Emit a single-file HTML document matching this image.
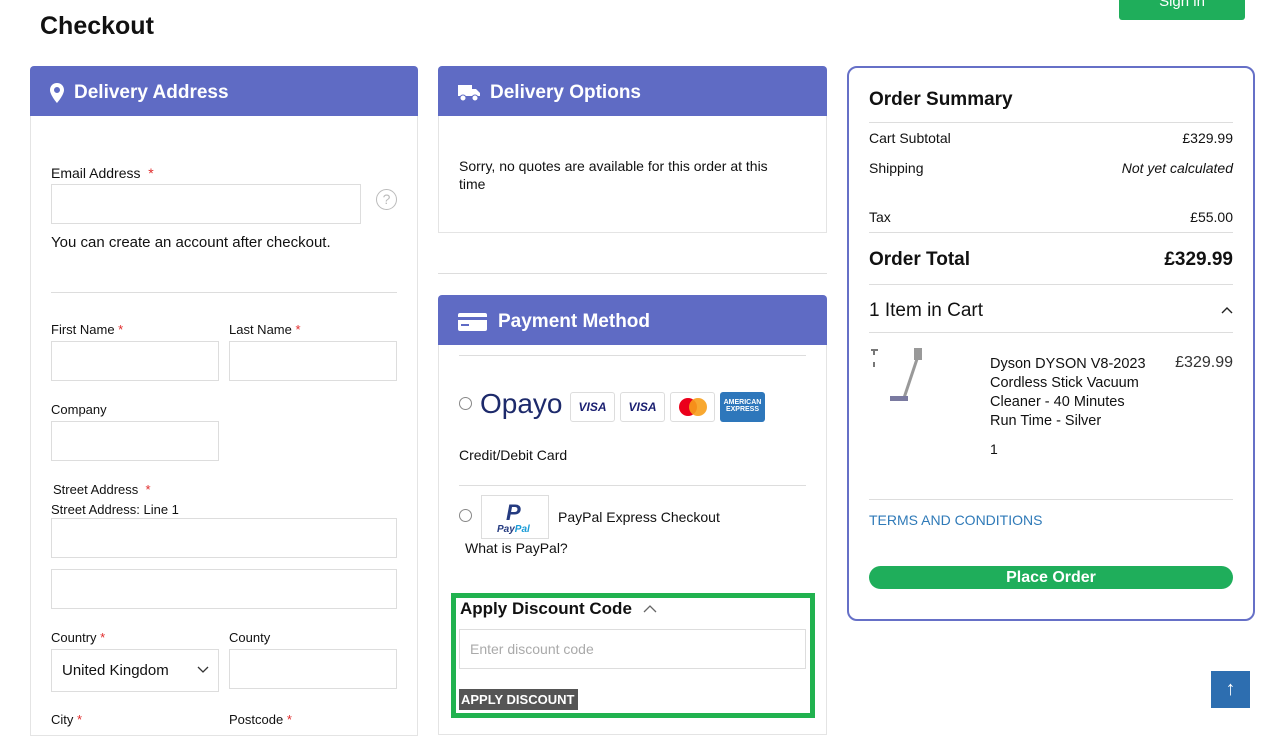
<!DOCTYPE html>
<html><head><meta charset="utf-8"><style>
*{box-sizing:border-box;margin:0;padding:0}
body{width:1280px;height:720px;overflow:hidden;background:#fff;font-family:"Liberation Sans",sans-serif;color:#111;position:relative}
.a{position:absolute}
.t{position:absolute;font-size:14px;white-space:nowrap}
.r{position:absolute;font-size:14px;white-space:nowrap;text-align:right}
.in{position:absolute;border:1px solid #ddd;background:#fff}
.hd{position:absolute;background:#5f6bc4;color:#fff;font-size:19px;font-weight:bold;border-radius:4px 4px 0 0;height:50px;display:flex;align-items:center;padding-left:20px;padding-top:4px;gap:10px}
.pan{position:absolute;border:1px solid #e4e4e4;border-top:none}
.st{color:#e02b2b}
.hr{position:absolute;height:1px;background:#ddd}
.card{position:absolute;width:45px;height:30px;border:1px solid #ddd;border-radius:3px;background:#fff;font:italic bold 12px "Liberation Sans",sans-serif;color:#1a1f71;display:flex;align-items:center;justify-content:center}
</style></head><body>
<div class="t" style="left:40px;top:12px;font-size:25px;font-weight:bold">Checkout</div>
<div class="a" style="left:1119px;top:0px;width:126px;height:20px;background:#1fae5b;border-radius:0 0 3px 3px;overflow:hidden"><div style="position:absolute;left:0;width:126px;top:-7px;color:#fff;font-size:15px;text-align:center">Sign in</div></div>

<!-- Delivery address -->
<div class="hd" style="left:30px;top:66px;width:388px"><svg width="14" height="20" viewBox="0 0 14 20"><path d="M7 0C3 0 0 3 0 7c0 5 7 13 7 13s7-8 7-13C14 3 11 0 7 0zm0 10a3 3 0 110-6 3 3 0 010 6z" fill="#fff"/></svg>Delivery Address</div>
<div class="pan" style="left:30px;top:116px;width:388px;height:620px"></div>
<div class="t" style="left:51px;top:165px">Email Address &nbsp;<span class="st">*</span></div>
<div class="in" style="left:51px;top:184px;width:310px;height:40px"></div>
<div class="a" style="left:376px;top:189px;width:21px;height:21px;border:1.5px solid #bbb;border-radius:50%;color:#bbb;font-size:14px;text-align:center;line-height:18px">?</div>
<div class="t" style="left:51px;top:234px;font-size:15px">You can create an account after checkout.</div>
<div class="hr" style="left:51px;top:292px;width:346px"></div>
<div class="t" style="left:51px;top:322px;font-size:13px">First Name <span class="st">*</span></div>
<div class="t" style="left:229px;top:322px;font-size:13px">Last Name <span class="st">*</span></div>
<div class="in" style="left:51px;top:341px;width:168px;height:40px"></div>
<div class="in" style="left:229px;top:341px;width:168px;height:40px"></div>
<div class="t" style="left:51px;top:402px;font-size:13px">Company</div>
<div class="in" style="left:51px;top:421px;width:168px;height:40px"></div>
<div class="t" style="left:53px;top:482px;font-size:13px">Street Address &nbsp;<span class="st">*</span></div>
<div class="t" style="left:51px;top:502px;font-size:13px">Street Address: Line 1</div>
<div class="in" style="left:51px;top:518px;width:346px;height:40px"></div>
<div class="in" style="left:51px;top:569px;width:346px;height:40px"></div>
<div class="t" style="left:51px;top:630px;font-size:13px">Country <span class="st">*</span></div>
<div class="t" style="left:229px;top:630px;font-size:13px">County</div>
<div class="in" style="left:51px;top:649px;width:168px;height:43px"></div>
<div class="t" style="left:62px;top:662px;font-size:15px">United Kingdom</div>
<svg class="a" style="left:197px;top:666px" width="12" height="8" viewBox="0 0 12 8"><path d="M1 1l5 5 5-5" stroke="#333" fill="none" stroke-width="1.3"/></svg>
<div class="in" style="left:229px;top:649px;width:168px;height:40px"></div>
<div class="t" style="left:51px;top:712px;font-size:13px">City <span class="st">*</span></div>
<div class="t" style="left:229px;top:712px;font-size:13px">Postcode <span class="st">*</span></div>

<!-- Delivery options -->
<div class="hd" style="left:438px;top:66px;width:389px"><svg width="22" height="18" viewBox="0 0 22 18"><path d="M0 1h14v11H0zM14 5h4l4 4v3h-8z" fill="#fff"/><circle cx="5" cy="14" r="3" fill="#fff" stroke="#5f6bc4"/><circle cx="17" cy="14" r="3" fill="#fff" stroke="#5f6bc4"/></svg>Delivery Options</div>
<div class="pan" style="left:438px;top:116px;width:389px;height:117px;border-bottom:1px solid #e4e4e4"></div>
<div class="t" style="left:459px;top:157px;font-size:14px;line-height:18px">Sorry, no quotes are available for this order at this<br>time</div>
<div class="hr" style="left:438px;top:273px;width:389px"></div>
<div class="hd" style="left:438px;top:295px;width:389px"><svg width="30" height="20" viewBox="0 0 30 20"><rect x="0" y="1" width="29" height="18" rx="2" fill="#fff"/><rect x="0" y="5" width="29" height="3" fill="#5f6bc4"/><rect x="3" y="12" width="8" height="2" fill="#5f6bc4"/></svg>Payment Method</div>
<div class="pan" style="left:438px;top:345px;width:389px;height:390px"></div>
<div class="hr" style="left:459px;top:355px;width:347px"></div>
<div class="a" style="left:459px;top:397px;width:13px;height:13px;border:1px solid #888;border-radius:50%"></div>
<div class="t" style="left:480px;top:388px;font-size:28px;color:#1d2a6b">Opayo</div>
<div class="card" style="left:570px;top:392px">VISA</div>
<div class="card" style="left:620px;top:392px">VISA</div>
<div class="card" style="left:670px;top:392px"><svg width="32" height="20"><circle cx="11" cy="10" r="9" fill="#eb001b"/><circle cx="21" cy="10" r="9" fill="#f79e1b" opacity=".9"/></svg></div>
<div class="a" style="left:720px;top:392px;width:45px;height:30px;background:#2e77bb;border-radius:3px;color:#fff;font:bold 7px sans-serif;text-align:center;padding-top:7px">AMERICAN<br>EXPRESS</div>
<div class="t" style="left:459px;top:447px;font-size:14px">Credit/Debit Card</div>
<div class="hr" style="left:459px;top:485px;width:347px"></div>
<div class="a" style="left:459px;top:509px;width:13px;height:13px;border:1px solid #888;border-radius:50%"></div>
<div class="a" style="left:481px;top:495px;width:68px;height:44px;border:1px solid #ddd"><div style="position:absolute;left:24px;top:4px;font:italic bold 22px sans-serif;color:#253b80">P</div><div style="position:absolute;left:15px;top:28px;font:italic bold 10px sans-serif;color:#253b80">Pay<span style="color:#179bd7">Pal</span></div></div>
<div class="t" style="left:558px;top:509px;font-size:14px">PayPal Express Checkout</div>
<div class="t" style="left:465px;top:540px;font-size:14px">What is PayPal?</div>
<div class="a" style="left:451px;top:593px;width:364px;height:125px;border:5px solid #21b24f"></div>
<div class="t" style="left:460px;top:599px;font-size:17px;font-weight:bold">Apply Discount Code</div>
<svg class="a" style="left:643px;top:604px" width="14" height="9"><path d="M1 8l6-6 6 6" stroke="#666" fill="none" stroke-width="1.3"/></svg>
<div class="in" style="left:459px;top:629px;width:347px;height:40px"></div>
<div class="t" style="left:470px;top:641px;font-size:14px;color:#aaa">Enter discount code</div>
<div class="a" style="left:459px;top:689px;width:119px;height:21px;background:#555;color:#fff;font-size:13px;font-weight:bold;line-height:21px;padding-left:2px;white-space:nowrap;overflow:hidden">APPLY DISCOUNT</div>

<!-- Order summary -->
<div class="a" style="left:847px;top:66px;width:408px;height:555px;border:2px solid #6670c7;border-radius:10px"></div>
<div class="t" style="left:869px;top:89px;font-size:19px;font-weight:bold">Order Summary</div>
<div class="hr" style="left:869px;top:122px;width:364px"></div>
<div class="t" style="left:869px;top:130px;font-size:14px">Cart Subtotal</div>
<div class="r" style="right:47px;top:130px;font-size:14px">£329.99</div>
<div class="t" style="left:869px;top:160px;font-size:14px">Shipping</div>
<div class="r" style="right:47px;top:160px;font-size:14px;font-style:italic">Not yet calculated</div>
<div class="t" style="left:869px;top:209px;font-size:14px">Tax</div>
<div class="r" style="right:47px;top:209px;font-size:14px">£55.00</div>
<div class="hr" style="left:869px;top:232px;width:364px"></div>
<div class="t" style="left:869px;top:249px;font-size:19px;font-weight:bold">Order Total</div>
<div class="r" style="right:47px;top:249px;font-size:19px;font-weight:bold">£329.99</div>
<div class="hr" style="left:869px;top:284px;width:364px"></div>
<div class="t" style="left:869px;top:300px;font-size:19px">1 Item in Cart</div>
<svg class="a" style="left:1221px;top:306px" width="12" height="8"><path d="M1 7l5-5 5 5" stroke="#222" fill="none" stroke-width="1.4"/></svg>
<div class="hr" style="left:869px;top:332px;width:364px"></div>
<svg class="a" style="left:868px;top:346px" width="60" height="60"><path d="M3 4h7M6 4v5M6 16v5" stroke="#777" stroke-width="2"/><path d="M52 4L36 52" stroke="#999" stroke-width="3"/><rect x="22" y="50" width="18" height="5" fill="#7a7aa0"/><rect x="46" y="2" width="8" height="12" fill="#999"/></svg>
<div class="t" style="left:990px;top:355px;font-size:14.5px;line-height:19px">Dyson DYSON V8-2023<br>Cordless Stick Vacuum<br>Cleaner - 40 Minutes<br>Run Time - Silver</div>
<div class="r" style="right:47px;top:354px;font-size:16px;color:#333">£329.99</div>
<div class="t" style="left:990px;top:441px;font-size:14px">1</div>
<div class="hr" style="left:869px;top:499px;width:364px"></div>
<div class="t" style="left:869px;top:512px;font-size:14px;color:#2f7ab8">TERMS AND CONDITIONS</div>
<div class="a" style="left:869px;top:566px;width:364px;height:23px;background:#1fae5b;border-radius:12px;color:#fff;font-size:16px;font-weight:bold;text-align:center;line-height:23px">Place Order</div>
<div class="a" style="left:1211px;top:671px;width:39px;height:37px;background:#2d6eb0;color:#fff;font-size:20px;text-align:center;line-height:37px;font-weight:bold">↑</div>
</body></html>
